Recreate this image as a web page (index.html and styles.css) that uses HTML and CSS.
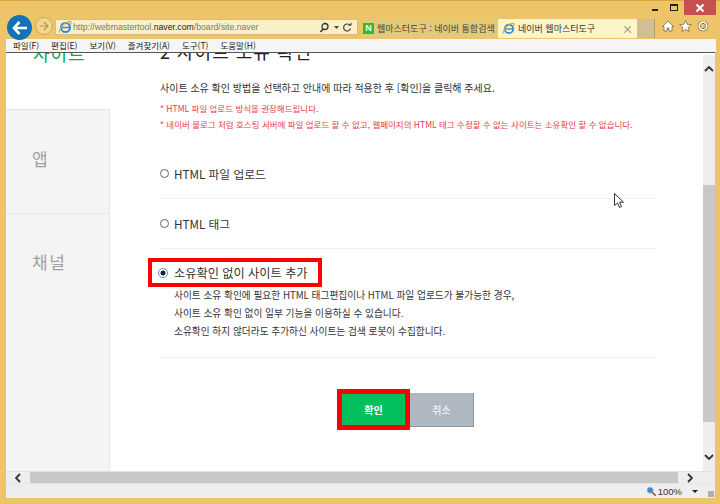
FILE: index.html
```html
<!DOCTYPE html>
<html lang="ko">
<head>
  <meta charset="UTF-8" />
  <title>네이버 웹마스터도구</title>
  <link rel="stylesheet" href="styles.css">
</head>
<body>
  <div class="window">
    <div class="caption">
      <span class="win-btn"><i class="min-icon"></i></span>
      <span class="win-btn"><i class="max-icon"></i></span>
      <span class="close-btn">
        <svg width="10" height="10" viewBox="0 0 10 10"><path d="M1.5 1.5l7 7M8.500 1.500l-7 7" stroke="#fff" stroke-width="2"/></svg>
      </span>
    </div>
    <div class="navbar">
      <span class="back-btn">
        <svg width="16" height="14" viewBox="0 0 16 14"><path d="M7.500 1L2 7l5.500 6M2.500 7H15" fill="none" stroke="#fff" stroke-width="2.600"/></svg>
      </span>
      <span class="forward-btn">
        <svg width="10" height="10" viewBox="0 0 10 10"><path d="M5 1l4 4-4 4M9 5H1" fill="none" stroke="#b8924a" stroke-width="1.200"/></svg>
      </span>
      <div class="address">
        <svg class="ie-icon" width="14" height="14" viewBox="0 0 14 14"><use href="#ie"/></svg>
        <span class="url">http://webmastertool.<b>naver.com</b>/board/site.naver</span>
        <svg class="addr-tool" width="34" height="11" viewBox="0 0 34 11">
          <circle cx="6" cy="4.500" r="3" fill="none" stroke="#333" stroke-width="1.300"/>
          <path d="M4 7L1.500 10" stroke="#333" stroke-width="1.500"/>
          <path d="M15 4h5l-2.500 3z" fill="#444"/>
          <path d="M31 3.500a3.500 3.500 0 1 0 .5 3" fill="none" stroke="#444" stroke-width="1.200"/>
          <path d="M29 3.500h3.500V0.500z" fill="#444"/>
        </svg>
      </div>
      <div class="tab tab-off">
        <span class="naver-icon">N</span>
        <span class="tab-text">웹마스터도구 : 네이버 통합검색</span>
      </div>
      <div class="tab tab-on">
        <svg class="ie-icon" width="13" height="13" viewBox="0 0 14 14"><use href="#ie"/></svg>
        <span class="tab-text">네이버 웹마스터도구</span>
        <span class="tab-close">×</span>
      </div>
      <div class="tab-new"></div>
      <div class="tools">
        <svg width="12" height="12" viewBox="0 0 12 12"><path d="M6 1L.5 6.500H2V11h3V8h2v3h3V6.500h1.500z" fill="#fff" stroke="#6b5b35" stroke-width=".7"/></svg>
        <svg width="13" height="12" viewBox="0 0 13 12"><path d="M6.500.5l1.700 3.800 4.100.4-3.100 2.700.9 4.100-3.600-2.100-3.600 2.100.9-4.100L.7 4.700l4.100-.4z" fill="#fff" stroke="#6b5b35" stroke-width=".7"/></svg>
        <svg width="12" height="12" viewBox="0 0 12 12"><circle cx="6" cy="6" r="3.800" fill="none" stroke="#6b5b35" stroke-width="3"/><circle cx="6" cy="6" r="3.800" fill="none" stroke="#fff" stroke-width="1.800"/></svg>
      </div>
    </div>
    <div class="menubar">
      <span>파일(F)</span>
      <span>편집(E)</span>
      <span>보기(V)</span>
      <span>즐겨찾기(A)</span>
      <span>도구(T)</span>
      <span>도움말(H)</span>
    </div>

    <div class="viewport">
      <div class="page">
        <div class="side">
          <div class="side-item side-current">사이트</div>
          <div class="side-item side-app">앱</div>
          <div class="side-item side-channel">채널</div>
        </div>
        <div class="main">
          <h2>2 사이트 소유 확인</h2>
          <p class="intro">사이트 소유 확인 방법을 선택하고 안내에 따라 적용한 후 [확인]을 클릭해 주세요.</p>
          <p class="warn warn-first">* HTML 파일 업로드 방식을 권장해드립니다.</p>
          <p class="warn">* 네이버 블로그 처럼 호스팅 서버에 파일 업로드 할 수 없고, 웹페이지의 HTML 태그 수정할 수 없는 사이트는 소유확인 할 수 없습니다.</p>

          <div class="option">
            <span class="radio"></span>
            <span class="option-label">HTML 파일 업로드</span>
          </div>
          <div class="option">
            <span class="radio"></span>
            <span class="option-label">HTML 태그</span>
          </div>
          <div class="option option-open">
            <div class="mark-box">
              <span class="radio radio-on"></span>
              <span class="option-label">소유확인 없이 사이트 추가</span>
            </div>
            <ul class="notes">
              <li>사이트 소유 확인에 필요한 HTML 태그편집이나 HTML 파일 업로드가 불가능한 경우,</li>
              <li>사이트 소유 확인 없이 일부 기능을 이용하실 수 있습니다.</li>
              <li>소유확인 하지 않더라도 추가하신 사이트는 검색 로봇이 수집합니다.</li>
            </ul>
          </div>

          <div class="buttons">
            <button class="btn btn-ok">확인</button>
            <button class="btn btn-cancel">취소</button>
          </div>
        </div>
      </div>
      <div class="vscroll">
        <span class="arrow">
          <svg width="10" height="6" viewBox="0 0 10 6"><path d="M1 5l4-4 4 4" fill="none" stroke="#333" stroke-width="1.800"/></svg>
        </span>
        <div class="vtrack"><div class="vthumb"></div></div>
        <span class="arrow">
          <svg width="10" height="6" viewBox="0 0 10 6"><path d="M1 1l4 4 4-4" fill="none" stroke="#333" stroke-width="1.800"/></svg>
        </span>
      </div>
      <svg class="cursor" width="11" height="16" viewBox="0 0 11 16"><path d="M.5.5v12l3-2.500 2 4.500 2-1-2-4.300h4z" fill="#fff" stroke="#333" stroke-width="1"/></svg>
    </div>

    <div class="hscroll">
      <span class="harrow">
        <svg width="6" height="10" viewBox="0 0 6 10"><path d="M5 1L1 5l4 4" fill="none" stroke="#333" stroke-width="1.800"/></svg>
      </span>
      <div class="hthumb"></div>
      <span class="harrow">
        <svg width="6" height="10" viewBox="0 0 6 10"><path d="M1 1l4 4-4 4" fill="none" stroke="#333" stroke-width="1.800"/></svg>
      </span>
      <span class="corner"></span>
    </div>
    <div class="statusbar">
      <svg width="10" height="10" viewBox="0 0 12 12"><circle cx="5" cy="5" r="3.600" fill="#3f86d8" stroke="#9db8d6"/><path d="M7.500 7.500l4 4" stroke="#7a4a20" stroke-width="1.800"/></svg>
      <span class="zoom">100%</span>
      <i class="zoom-caret"></i>
      <i class="grip"></i>
    </div>
  </div>

  <svg class="defs" width="0" height="0">
    <symbol id="ie" viewBox="0 0 14 14">
      <circle cx="7.500" cy="7.500" r="4.500" fill="none" stroke="#2b8fe0" stroke-width="2"/>
      <path d="M4 7.500h7.500" stroke="#2b8fe0" stroke-width="1.500"/>
      <path d="M1.500 12.500C.5 10 5 3 11 1.500c2-.5 2.500 1 1.500 3" fill="none" stroke="#e0a82a" stroke-width="1.200"/>
    </symbol>
  </svg>
</body>
</html>
```

FILE: styles.css
```css
* { box-sizing: border-box; }
html, body { margin: 0; height: 100%; overflow: hidden; }
body { font-family: "Noto Sans CJK KR", "Liberation Sans", sans-serif; color: #333; }
p, h2, ul { margin: 0; padding: 0; }

.window {
  width: 720px; height: 504px;
  display: flex; flex-direction: column;
  background: #edc468;
  border-top: 1px solid #d9a93f;
  padding: 0 5px 6px 6px;
}

/* title bar */
.caption { height: 14px; display: flex; justify-content: flex-end; align-items: flex-start; margin-top: -1px; margin-right: -1px; flex: none; }
.win-btn { width: 19px; height: 14px; display: flex; align-items: center; justify-content: center; }
.min-icon { width: 6px; height: 2px; background: #222; margin-top: 6px; }
.max-icon { width: 8px; height: 7px; border: 1px solid #222; border-top-width: 2px; }
.close-btn { width: 32px; height: 15px; margin-left: 1px; background: #c75050; display: flex; align-items: center; justify-content: center; }

.navbar { height: 25px; flex: none; display: flex; align-items: flex-start; margin-left: -6px; margin-right: -5px; padding-left: 7px; }
.back-btn { width: 25px; height: 25px; margin-top: 1px; border-radius: 50%; background: #1272b8; display: flex; align-items: center; justify-content: center; flex: none; position: relative; z-index: 1; }
.forward-btn { width: 18px; height: 18px; margin: 3px 0 0 3px; border-radius: 50%; border: 1px solid #c9a75e; background: #f3d58e; display: flex; align-items: center; justify-content: center; flex: none; }
.address { width: 303px; height: 16px; margin: 5px 0 0 2px; background: #fbefc6; border: 1px solid #d9bd78; display: flex; align-items: center; padding: 0 4px 0 2px; flex: none; }
.ie-icon { flex: none; }
.url { flex: 1; font-family: "Liberation Sans", sans-serif; font-size: 8.700px; color: #7a7a70; margin-left: 1px; white-space: nowrap; }
.url b { font-weight: normal; color: #222; }
.addr-tool { flex: none; }

.tab { height: 19px; margin-top: 5px; display: flex; align-items: center; flex: none; font-size: 9px; line-height: 12px; white-space: nowrap; overflow: hidden; }
.tab-off { width: 135px; margin-left: 5px; background: #e3c978; color: #4a4438; }
.tab-on { width: 139px; background: #fdf5c8; padding-left: 4px; color: #333; }
.tab-text { margin-left: 3px; }
.tab-close { margin-left: auto; margin-right: 4px; color: #777; font-size: 11px; }
.naver-icon { width: 11px; height: 11px; background: #25c02c; color: #fff; font: bold 9px/11px "Liberation Sans", sans-serif; text-align: center; flex: none; }
.tab-new { width: 18px; height: 19px; margin-top: 5px; background: #cfbe97; flex: none; border-right: 1px solid #b39b62; }
.tools { display: flex; gap: 5px; margin: 6px 0 0 7px; }

.menubar { height: 13px; margin-right: -1px; background: #f5f5f5; display: flex; gap: 12px; padding-left: 7px; font-size: 8.500px; line-height: 13px; color: #222; flex: none; }

/* page area */
.viewport { flex: 1; min-height: 0; display: flex; border-top: 1px solid #555; background: #fff; position: relative; overflow: hidden; }
.page { flex: 1; display: flex; min-width: 0; }
.side { width: 104px; flex: none; margin-top: -12px; background: #f3f4f6; border-right: 1px solid #e3e5e8; display: flex; flex-direction: column; }
.side-item { font-size: 17px; color: #a0a0a0; padding-left: 26px; display: flex; }
.side-current { height: 68px; padding-left: 27px; padding-top: 2px; background: #fff; color: #03a85c; font-size: 18px; line-height: 20px; letter-spacing: 1px; margin-right: -1px; }
.side-app { height: 105px; align-items: center; padding-bottom: 6px; border-top: 1px solid #e3e5e8; border-bottom: 1px solid #e3e5e8; }
.side-channel { flex: 1; align-items: flex-start; padding-top: 35px; letter-spacing: 1.500px; }

.main { flex: 1; padding-left: 50px; min-width: 0; }
.main h2 { font-size: 18px; font-weight: normal; letter-spacing: 1px; line-height: 20px; margin-top: -12px; color: #222; white-space: nowrap; }
.intro { font-size: 10px; line-height: 16px; margin-top: 19px; color: #333; white-space: nowrap; }
.warn { font-size: 8.500px; line-height: 16px; color: #e83c45; white-space: nowrap; }
.warn-first { margin-top: 4px; }

.option { width: 496px; height: 50px; border-bottom: 1px solid #f2f2f2; display: flex; align-items: center; }
.warn + .option { margin-top: 16px; height: 51px; }
.radio { width: 9px; height: 9px; border-radius: 50%; border: 1px solid #666; flex: none; background: #fff; }
.radio-on { width: 10px; height: 10px; border-color: #4a90c8; background: radial-gradient(circle, #222 0 2.200px, #fff 2.800px); }
.option-label { font-size: 11.700px; color: #333; margin-left: 5px; white-space: nowrap; }

.option-open { height: 109px; display: block; padding-top: 9px; }
.mark-box { width: 174px; height: 29px; margin-left: -12px; border: 4.500px solid #f00; display: flex; align-items: center; padding-left: 6px; }
.mark-box .option-label { font-size: 12.200px; margin-left: 6px; }
.notes { list-style: none; margin: -1px 0 0 14px; font-size: 9.700px; line-height: 18px; color: #333; white-space: nowrap; }

.buttons { display: flex; align-items: center; margin: 31px 0 0 177px; }
.btn { font-family: inherit; font-size: 10px; font-weight: bold; color: #fff; border: 0; padding: 0; height: 34px; width: 64px; }
.btn-ok { width: 73px; height: 41px; background: #03c05e; border: 5px solid #f00; }
.btn-cancel { background: #aeb7c2; border-right: 1px solid #8c96a3; border-bottom: 1px solid #8c96a3; color: #e8eaee; }

.vscroll { width: 12px; margin-top: 2px; flex: none; background: #eee; display: flex; flex-direction: column; }
.arrow { height: 28px; display: flex; align-items: center; justify-content: center; flex: none; }
.vtrack { flex: 1; padding-top: 102px; padding-bottom: 21px; }
.vthumb { height: 100%; background: #c8c8c8; }
.cursor { position: absolute; left: 608px; top: 140px; }

/* bottom bars */
.hscroll { height: 12px; flex: none; display: flex; background: #eee; border-top: 1px solid #e2e2e2; }
.harrow { width: 24px; display: flex; align-items: center; justify-content: center; flex: none; }
.hthumb { flex: 1; background: #c8c8c8; }
.corner { width: 13px; flex: none; }
.statusbar { height: 15px; flex: none; background: #eee; border-top: 1px solid #e5e5e5; display: flex; align-items: center; justify-content: flex-end; padding-right: 1px; }
.zoom { font-family: "Liberation Sans", sans-serif; font-size: 9.500px; color: #333; margin-left: 2px; }
.zoom-caret { width: 0; height: 0; border: 3px solid transparent; border-top: 3px solid #222; border-bottom: 0; margin-left: 10px; }
.grip { width: 6px; height: 6px; margin: 5px 0 0 10px; background-image: radial-gradient(#aaa .7px, transparent .8px); background-size: 2px 2px; }
.defs { position: absolute; }
```
